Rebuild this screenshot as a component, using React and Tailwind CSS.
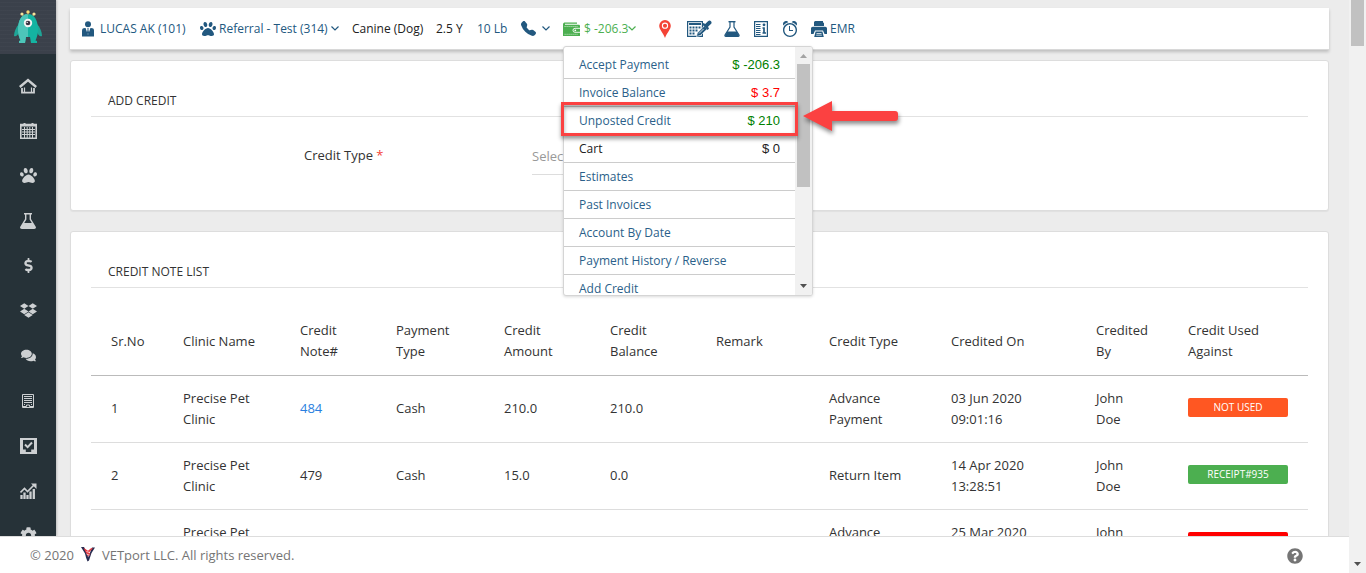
import { FaPaw, FaDropbox, FaComments, FaDollarSign, FaQuestionCircle, FaCog } from "react-icons/fa";
import { BsTelephoneFill } from "react-icons/bs";
import { ImAlarm } from "react-icons/im";

const menuItems = [
  { label: "Accept Payment", amount: "$ -206.3", color: "text-[#008000]" },
  { label: "Invoice Balance", amount: "$ 3.7", color: "text-[#ff0000]" },
  { label: "Unposted Credit", amount: "$ 210", color: "text-[#008000]" },
  { label: "Cart", amount: "$ 0", color: "text-[#212121]", plain: true },
  { label: "Estimates" },
  { label: "Past Invoices" },
  { label: "Account By Date" },
  { label: "Payment History / Reverse" },
  { label: "Add Credit" },
];

const columns = [
  { label: "Sr.No", width: "w-[72px]" },
  { label: "Clinic Name", width: "w-[117px]" },
  { label: "Credit Note#", width: "w-[96px]" },
  { label: "Payment Type", width: "w-[108px]" },
  { label: "Credit Amount", width: "w-[106px]" },
  { label: "Credit Balance", width: "w-[106px]" },
  { label: "Remark", width: "w-[113px]" },
  { label: "Credit Type", width: "w-[122px]" },
  { label: "Credited On", width: "w-[145px]" },
  { label: "Credited By", width: "w-[92px]" },
  { label: "Credit Used Against", width: "w-[140px]" },
];

const rows = [
  {
    no: "1",
    note: "484",
    link: true,
    payment: "Cash",
    amount: "210.0",
    balance: "210.0",
    type: "Advance Payment",
    date: "03 Jun 2020",
    time: "09:01:16",
    used: "NOT USED",
    usedColor: "bg-[#ff5722]",
  },
  {
    no: "2",
    note: "479",
    payment: "Cash",
    amount: "15.0",
    balance: "0.0",
    type: "Return Item",
    date: "14 Apr 2020",
    time: "13:28:51",
    used: "RECEIPT#935",
    usedColor: "bg-[#4caf50]",
  },
  {
    no: "",
    type: "Advance Payment",
    date: "25 Mar 2020",
    usedColor: "bg-[#ff0000]",
  },
];

function MonsterLogo() {
  return (
    <svg viewBox="0 0 28 34" className="h-[34px] w-7">
      <path d="M5 14C2 17 0 22 0 26c2 1 4-1 5-4zM23 14c3 3 5 8 5 12-2 1-4-1-5-4z" fill="#1fa597" />
      <path d="M14 4C7 4 4 11 4 20c0 4 1 7 2.500 10.500L5 31v2h6l1-6h4l1 6h6v-2l-1.500-.5C23 27 24 24 24 20c0-9-3-16-10-16z" fill="#14b3a1" />
      <path d="M14 4C7 4 4 11 4 20c0 4 1 7 2.500 10.500L5 31v2h6l1-6h2z" fill="#4dc5b9" />
      <path d="M14 5V2M9 6L8 4M19 6l1-2" stroke="#8a8f6a" />
      <circle cx="14" cy="2" r="1.700" fill="#f7d978" />
      <circle cx="8" cy="4" r="1.600" fill="#f7e49a" />
      <circle cx="20" cy="4" r="1.600" fill="#f7e49a" />
      <circle cx="14" cy="13" r="4.200" fill="#f3f3f3" />
      <circle cx="14" cy="13" r="2.300" fill="#3b3442" />
      <circle cx="13.200" cy="12.400" r="0.700" fill="#fff" />
    </svg>
  );
}

function HomeIcon() {
  return (
    <svg viewBox="0 0 18 16" className="h-4 w-[18px]" fill="none" stroke="currentColor" strokeWidth="2">
      <path d="M.8 9L9 2l8.200 7" strokeWidth="2.400" />
      <path d="M3 10v4.600h12V10" strokeWidth="1.800" />
      <path d="M5.500 9.500V14M12.500 9.500V14" strokeWidth="1.200" />
    </svg>
  );
}

function CalendarIcon() {
  return (
    <svg viewBox="0 0 17 16" className="h-4 w-[17px]" fill="none" stroke="currentColor">
      <path d="M.8 1.500h15.400v13.800H.8z" strokeWidth="1.600" />
      <path d="M1 2.500h15" strokeWidth="2" />
      <path d="M4.500 0v2M12.500 0v2" strokeWidth="2" />
      <path d="M2 6.500h13M2 9h13M2 11.500h13M4.500 4v11M7.200 4v11M9.800 4v11M12.500 4v11" strokeWidth="1" />
    </svg>
  );
}

function FlaskIcon() {
  return (
    <svg viewBox="0 0 16 16" className="size-4">
      <path
        d="M4 0h8v1.400h-1V6l4.600 7.400c.8 1.400.2 2.600-1.400 2.600H1.800C.2 16-.4 14.800.4 13.400L5 6V1.400H4zM6.400 1.400v5L4.200 10h7.600L9.600 6.400v-5z"
        fill="currentColor"
        fillRule="evenodd"
      />
    </svg>
  );
}

function BuildingIcon() {
  return (
    <svg viewBox="0 0 12 14" className="h-[14px] w-3" fill="none" stroke="currentColor">
      <path d="M.5.5h11v13H.5z" />
      <path d="M2 2.500h8M2 4.500h8M2 6.500h8M2 8.500h8" />
      <path d="M1 12.500h3.500V11h3v1.500H11M2 10.500h1M9 10.500h1" />
    </svg>
  );
}

function TaskIcon() {
  return (
    <svg viewBox="0 0 17 16" className="h-4 w-[17px]">
      <path d="M0 0h17v16H0zM3 2v9.500h2.800V14h5.400v-2.500H14V2z" fill="currentColor" fillRule="evenodd" />
      <path d="M5 6.500l2.600 2.600L12 4.500" fill="none" stroke="currentColor" strokeWidth="2" />
    </svg>
  );
}

function ChartIcon() {
  return (
    <svg viewBox="0 0 17 16" className="h-4 w-[17px]" fill="none" stroke="currentColor">
      <path d="M1.500 16v-4M4.500 16V9.500M7.500 16v-4M10.500 16V8.500M13.800 16V6" strokeWidth="2.300" />
      <path d="M.5 9.500L4.500 5.500l3 3L14 2" strokeWidth="1.600" />
      <path d="M11 .5h5.500V6z" fill="currentColor" stroke="none" />
    </svg>
  );
}

function ClientIcon() {
  return (
    <svg viewBox="0 0 12 16" className="h-4 w-3">
      <circle cx="6" cy="3.200" r="3" fill="currentColor" />
      <path d="M0 15.500V9.500C0 7.800 1 7 3 7h6c2 0 3 .8 3 2.500v6z" fill="currentColor" />
      <path d="M3.500 6.800L6 14l2.500-7.200z" fill="#fff" />
      <path d="M5.200 7.200h1.600l-.4 1.600.7 3L6 14l-1.100-2.200.7-3z" fill="currentColor" />
    </svg>
  );
}

function WalletIcon() {
  return (
    <svg viewBox="0 0 17 14" className="h-[14px] w-[17px]">
      <path d="M0 2.500C0 1 1 .5 2 .5h12v1.200H2v1h13.500c.8 0 1.500.5 1.500 1.300V14H0z" fill="currentColor" />
      <path d="M1.500 4.500h13M1.500 12.300h13" stroke="#fff" strokeWidth=".6" strokeDasharray="1.200 .8" />
      <path d="M17 6.300h-5a2 2 0 000 4h5" fill="currentColor" stroke="#fff" strokeWidth=".9" />
      <circle cx="12.300" cy="8.300" r=".9" fill="#fff" />
    </svg>
  );
}

function PinIcon() {
  return (
    <svg viewBox="0 0 12 18" className="h-[18px] w-3">
      <path d="M6 0a5.800 5.800 0 00-5.800 5.800C.2 9.500 4 12.500 6 18c2-5.500 5.800-8.500 5.800-12.200A5.800 5.800 0 006 0z" fill="#f44336" />
      <circle cx="6" cy="5.700" r="2.600" fill="none" stroke="#fff" strokeWidth="1.100" />
    </svg>
  );
}

function CalculatorIcon() {
  return (
    <svg viewBox="0 0 25 17" className="h-[17px] w-[25px]">
      <path d="M.6 1.600h14.800v14.800H.6z" fill="#fff" stroke="currentColor" strokeWidth="1.200" />
      <path d="M2 3h12v2H2z" fill="currentColor" />
      <path
        d="M2.500 6.500h2v2h-2zM5.500 6.500h2v2h-2zM8.500 6.500h2v2h-2zM11.500 6.500h2v2h-2zM2.500 9.500h2v2h-2zM5.500 9.500h2v2h-2zM8.500 9.500h2v2h-2zM2.500 12.500h2v2h-2zM5.500 12.500h2v2h-2z"
        fill="currentColor"
      />
      <path d="M9.500 16.500l.8-3.500 7-7 3 3-7 6.500z" fill="currentColor" stroke="#fff" strokeWidth=".6" />
      <path d="M12 13.500l4.500-4.500" stroke="#fff" strokeWidth=".8" />
      <path d="M15 4.300l1.500-1.300 1.700 1L21 1.200c1-.9 2.200-.9 3 0 .8.800.8 2-.1 2.900L21 6.800l1 1.700-1.400 1.400z" fill="currentColor" />
    </svg>
  );
}

function BeakerIcon() {
  return (
    <svg viewBox="0 0 16 16" className="size-4" fill="none" stroke="currentColor">
      <path d="M4.500.7h7" strokeWidth="1.400" />
      <path d="M6 1v5L1 14c-.3.800 0 1.300.8 1.300h12.400c.8 0 1.100-.5.8-1.300L10 6V1" strokeWidth="1.200" />
      <path d="M3.200 10.500h9.600L15 14.500l-.8.800H1.800L1 14.500z" fill="currentColor" stroke="none" />
    </svg>
  );
}

function RecordIcon() {
  return (
    <svg viewBox="0 0 14 16" className="h-4 w-[14px]" fill="none" stroke="currentColor">
      <path d="M.6.6h12.800v14.800H.6z" strokeWidth="1.200" />
      <path d="M2 3.500h4.500M2 5.500h4.500M2 7.500h4.500M2 9.500h4.500M2 11.500h4.500M2 13.500h4.500" />
      <path d="M8.500 7H10v4.500M8.500 12h3.500" strokeWidth="1.700" />
      <circle cx="10" cy="3.800" r="1.400" fill="currentColor" stroke="none" />
    </svg>
  );
}

function PrinterIcon() {
  return (
    <svg viewBox="0 0 16 16" className="size-4">
      <path d="M4 0h8v1.200l1 1V5H3V1z" fill="currentColor" />
      <path d="M1.800 5.800h12.400c1 0 1.800.8 1.800 1.800V13h-2.500l-1.500-3.500H4L2.500 13H0V7.600c0-1 .8-1.800 1.800-1.800z" fill="currentColor" />
      <path d="M4.600 10.500h6.800l1.400 5.500H3.200zM5.500 12v.8h5V12zM5.200 13.800v.8h5.600v-.8z" fill="currentColor" fillRule="evenodd" />
    </svg>
  );
}

function Chevron() {
  return (
    <svg viewBox="0 0 8 5" className="h-[5px] w-2" fill="none" stroke="currentColor" strokeWidth="1.200">
      <path d="M.5.5L4 4 7.500.5" />
    </svg>
  );
}

function VetportLogo() {
  return (
    <svg viewBox="0 0 14 15" className="h-[15px] w-[14px]">
      <path d="M0 0h3l3.500 6.500.5 4L8.500 7 11 .5h3L10.500 6 8 13.500l-1.500 1L5 10.500 4 6.500z" fill="#262a4f" />
      <path d="M2.500.8L7 3.800l3-2.500 2-.3-4 4.500L9.500 7 7 9.500 4.500 5z" fill="#e5383f" />
      <path d="M5.500 4.500l3 1M5.500 7l3 1.200" stroke="#fff" strokeWidth=".7" />
    </svg>
  );
}

const navItems = [
  { label: "Home", icon: <HomeIcon /> },
  { label: "Calendar", icon: <CalendarIcon /> },
  { label: "Patients", icon: <FaPaw size={17} /> },
  { label: "Lab", icon: <FlaskIcon /> },
  { label: "Billing", icon: <FaDollarSign size={15} /> },
  { label: "Inventory", icon: <FaDropbox size={17} /> },
  { label: "Messages", icon: <FaComments size={15} /> },
  { label: "Clinic", icon: <BuildingIcon /> },
  { label: "Tasks", icon: <TaskIcon /> },
  { label: "Reports", icon: <ChartIcon /> },
  { label: "Settings", icon: <FaCog size={17} /> },
];

function Sidebar() {
  return (
    <nav className="z-10 flex w-14 shrink-0 flex-col overflow-hidden bg-[#263238] text-[#cdd0d2] shadow-[1px_0_2px_rgba(0,0,0,0.2)]">
      <a
        href="#home"
        aria-label="Dashboard"
        className="flex h-[54px] shrink-0 items-center justify-center bg-[#3b414b] bg-[repeating-linear-gradient(0deg,transparent_0_3px,rgba(255,255,255,0.02)_3px_4px)]"
      >
        <MonsterLogo />
      </a>
      <div className="flex flex-col pt-[9px]">
        {navItems.map((item) => (
          <a key={item.label} href="#nav" aria-label={item.label} className="flex h-[45px] shrink-0 items-center justify-center">
            {item.icon}
          </a>
        ))}
      </div>
    </nav>
  );
}

function PaymentMenu() {
  return (
    <div className="absolute top-[26px] left-0 z-20 w-[250px]">
      <div className="flex h-[250px] overflow-hidden rounded-[3px] border border-[#d5d5d5] bg-white shadow-[0_1px_3px_rgba(0,0,0,0.15)]">
        <ul className="flex-1 pt-1">
          {menuItems.map((item) => (
            <li key={item.label} className="h-7 border-b border-[#cccccc]">
              <a
                href="#menu"
                className={`flex h-full items-center justify-between px-[15px] pt-0.5 text-[12px] ${item.plain ? "text-[#212121]" : "text-[#2b5f8a]"}`}
              >
                {item.label}
                {item.amount && (
                  <span className={`font-['Liberation_Sans',sans-serif] text-[13px] ${item.color}`}>{item.amount}</span>
                )}
              </a>
            </li>
          ))}
        </ul>
        <div className="flex w-[17px] flex-col items-center bg-[#f1f1f1]">
          <svg viewBox="0 0 17 17" className="size-[17px] shrink-0">
            <path d="M5 11h7L8.500 7z" fill="#a3a3a3" />
          </svg>
          <div className="h-[123px] w-[13px] bg-[#c1c1c1]" />
          <svg viewBox="0 0 17 17" className="mt-auto size-[17px] shrink-0">
            <path d="M5 6h7l-3.500 4z" fill="#505050" />
          </svg>
        </div>
      </div>
      {/* callout around the Unposted Credit row */}
      <div className="pointer-events-none absolute top-14 -left-0.5 h-[34px] w-[237px] border-3 border-[#fb4141] shadow-[0_3px_4px_rgba(0,0,0,0.4),inset_0_3px_4px_rgba(0,0,0,0.35)]" />
      <svg viewBox="0 0 96 32" className="pointer-events-none absolute top-[54px] left-[239px] h-8 w-24 drop-shadow-[1px_3px_2px_rgba(0,0,0,0.45)]">
        <path d="M1 16L30 1v10h63q3 0 3 3v4q0 3-3 3H30v10z" fill="#fb4141" />
      </svg>
    </div>
  );
}

function PatientBar() {
  return (
    <header className="relative z-20 flex h-[42px] items-center border-b border-[#d8d8d8] bg-white pl-3 text-[12px] text-[#22587f] shadow-[0_2px_3px_rgba(0,0,0,0.2)]">
      <a href="#client" className="flex w-[118px] items-center gap-1.5">
        <ClientIcon />
        LUCAS AK (101)
      </a>
      <button type="button" className="flex w-[152px] items-center gap-[3px]">
        <FaPaw size={16} />
        Referral - Test (314)
        <Chevron />
      </button>
      <span className="w-[84px] text-[#212121]">Canine (Dog)</span>
      <span className="w-[41px] text-[#212121]">2.5 Y</span>
      <a href="#weight" className="w-11">10 Lb</a>
      <button type="button" aria-label="Call" className="flex w-[42px] items-center gap-1.5">
        <BsTelephoneFill size={15} />
        <Chevron />
      </button>
      <div className="relative w-24 text-[#4caf50]">
        <button type="button" className="flex items-center gap-1">
          <WalletIcon />
          <span className="flex items-center">
            $ -206.3
            <Chevron />
          </span>
        </button>
        <PaymentMenu />
      </div>
      <a href="#location" aria-label="Location" className="w-7"><PinIcon /></a>
      <a href="#estimate" aria-label="Calculator" className="w-[37px]"><CalculatorIcon /></a>
      <a href="#lab" aria-label="Lab" className="w-[30px]"><BeakerIcon /></a>
      <a href="#record" aria-label="Record" className="w-7"><RecordIcon /></a>
      <a href="#reminder" aria-label="Reminders" className="w-[29px]"><ImAlarm size={16} /></a>
      <a href="#emr" className="flex items-center gap-[3px]">
        <PrinterIcon />
        EMR
      </a>
    </header>
  );
}

function CreditTable() {
  return (
    <table className="mt-5 w-full table-fixed text-left text-[13px] leading-[21px] text-[#333333]">
      <thead>
        <tr className="h-[67px] border-b border-[#bbbbbb]">
          {columns.map((col) => (
            <th key={col.label} className={`${col.width} px-5 align-middle font-normal`}>
              {col.label}
            </th>
          ))}
        </tr>
      </thead>
      <tbody>
        {rows.map((row) => (
          <tr key={row.date} className="h-[67px] border-b border-[#dddddd]">
            <td className="px-5">{row.no}</td>
            <td className="px-5">Precise Pet Clinic</td>
            <td className="px-5">
              {row.link ? <a href="#note" className="text-[#2a7fe0]">{row.note}</a> : row.note}
            </td>
            <td className="px-5">{row.payment}</td>
            <td className="px-5">{row.amount}</td>
            <td className="px-5">{row.balance}</td>
            <td className="px-5" />
            <td className="px-5">{row.type}</td>
            <td className="px-5 py-3 align-top">
              {row.date}
              <br />
              {row.time}
            </td>
            <td className="px-5">
              John
              <br />
              Doe
            </td>
            <td className="px-5 pb-0.5">
              <span className={`block h-[19px] rounded-[2px] text-center text-[10px] leading-[19px] text-white ${row.usedColor}`}>
                {row.used}
              </span>
            </td>
          </tr>
        ))}
      </tbody>
    </table>
  );
}

export default function App() {
  return (
    <div className="flex h-screen overflow-hidden bg-[#ececec] font-['Open_Sans',sans-serif]">
      <div className="flex min-w-0 flex-1 flex-col">
        <div className="flex min-h-0 flex-1">
          <Sidebar />
          <main className="min-w-0 flex-1 overflow-hidden pt-2 pr-5 pl-[14px]">
            <PatientBar />
            <section className="mt-2.5 h-[151px] rounded-[3px] border border-[#dddddd] bg-white px-5 shadow-[0_1px_1px_rgba(0,0,0,0.05)]">
              <h2 className="flex h-14 items-end border-b border-[#e2e2e2] px-[17px] pb-1.5 text-[12px] text-[#333333]">ADD CREDIT</h2>
              <div className="flex pt-6 pl-[213px] text-[13px] text-[#333333]">
                <label htmlFor="credit-type" className="w-[228px] pt-[5px]">
                  Credit Type <span className="text-[#f44336]">*</span>
                </label>
                <select
                  id="credit-type"
                  className="h-[34px] w-[250px] appearance-none border-b border-[#dddddd] bg-transparent pb-0.5 text-[#999999]"
                >
                  <option>Select</option>
                </select>
              </div>
            </section>
            <section className="mt-5 rounded-[3px] border border-[#dddddd] bg-white px-5 pb-5 shadow-[0_1px_1px_rgba(0,0,0,0.05)]">
              <h2 className="flex h-14 items-end border-b border-[#e2e2e2] px-[17px] pb-1.5 text-[12px] text-[#333333]">CREDIT NOTE LIST</h2>
              <CreditTable />
            </section>
          </main>
        </div>
        <footer className="z-20 flex h-[37px] shrink-0 items-center border-t border-[#dddddd] bg-white pt-0.5 pr-[46px] pl-[30px] text-[13px] text-[#757575]">
          <span>© 2020</span>
          <span className="mr-[7px] mb-1 ml-[7px]"><VetportLogo /></span>
          <span>VETport LLC. All rights reserved.</span>
          <button type="button" aria-label="Help" className="ml-auto">
            <FaQuestionCircle size={16} />
          </button>
        </footer>
      </div>
      <div className="flex w-[17px] shrink-0 flex-col items-center bg-[#f1f1f1]">
        <div className="h-[46px] w-[13px] bg-[#c1c1c1]" />
        <svg viewBox="0 0 17 17" className="mt-auto size-[17px]">
          <path d="M5 6h7l-3.500 4z" fill="#505050" />
        </svg>
      </div>
    </div>
  );
}
